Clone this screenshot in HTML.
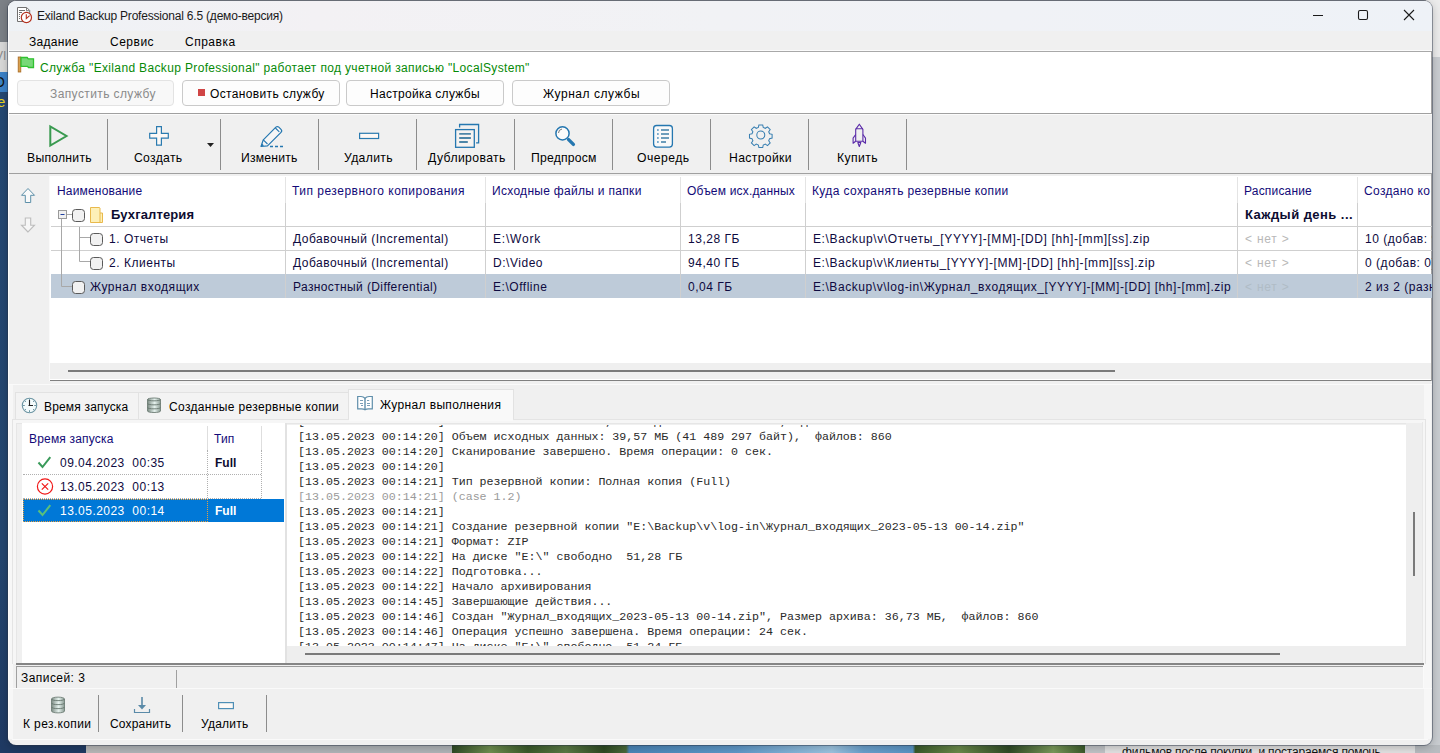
<!DOCTYPE html>
<html><head><meta charset="utf-8">
<style>
*{box-sizing:border-box}
html,body{margin:0;padding:0}
body{width:1440px;height:753px;position:relative;overflow:hidden;background:#c9cdd1;font-family:"Liberation Sans",sans-serif;font-size:12px;color:#000}
.a{position:absolute}
.t{position:absolute;white-space:nowrap;line-height:1;}
.win{position:absolute;left:8px;top:1px;width:1424px;height:744px;border-radius:8px;overflow:hidden;background:#f0f0f0;box-shadow:0 0 0 1px rgba(40,50,70,.45),0 2px 10px rgba(0,0,0,.25)}
.pc{position:absolute;left:-8px;top:-1px;width:1440px;height:753px}
.btn{position:absolute;border:1px solid #cacaca;border-radius:4px;background:#fdfdfd}
.sep{position:absolute;width:1px;background:#8c8c8c}
.hd{color:#120a78;letter-spacing:.18px}
.cell{color:#0e0a40;letter-spacing:.53px}
.log{position:absolute;left:298px;font-family:"Liberation Mono",monospace;font-size:11.65px;line-height:15px;white-space:pre;color:#2a2a2a}
</style></head><body>
<!-- desktop left strip -->
<div class="a" style="left:0;top:0;width:20px;height:42px;background:#7c8187"></div>
<div class="a" style="left:0;top:42px;width:8px;height:30px;background:#d9d9d9"></div>
<div class="a" style="left:0;top:72px;width:8px;height:20px;background:#3b82c8"></div>
<div class="a" style="left:0;top:92px;width:20px;height:661px;background:linear-gradient(180deg,#254873 0%,#244670 70%,#1f3a63 100%)"></div>
<div class="a" style="left:0;top:0;width:8px;height:120px;overflow:hidden">
  <div class="t" style="left:-5px;top:50px;font-size:12px;color:#8a8a8a">VI</div>
  <div class="t" style="left:-6px;top:75px;font-size:14px;color:#111">O</div>
  <div class="t" style="left:-3px;top:94px;font-size:15px;color:#e6d21e">e</div>
</div>
<!-- desktop bottom strip -->
<div class="a" style="left:0;top:745px;width:86px;height:8px;background:#1f3a63"></div>
<div class="a" style="left:86px;top:745px;width:34px;height:8px;background:#b8b8b8"></div>
<div class="a" style="left:120px;top:745px;width:332px;height:8px;background:#b0b4b8"></div>
<div class="a" style="left:452px;top:745px;width:633px;height:8px;background:linear-gradient(90deg,#2f4a25 0%,#6f8f50 6%,#3a5a2a 12%,#5a7a45 18%,#2e4a22 24%,#4a6a3a 27.5%,#4a86b8 28%,#5f98c8 45%,#9cc4e0 60%,#6aa0cc 65%,#5a94c4 72.8%,#3a5a2a 73.2%,#6a8a4a 80%,#2f4a25 88%,#7a9a5a 95%,#3a5a2a 100%)"></div>
<div class="a" style="left:1420px;top:0;width:20px;height:57px;background:#ececec"></div>
<div class="a" style="left:1415px;top:745px;width:25px;height:8px;background:#b8bcc0"></div>
<div class="a" style="left:1085px;top:745px;width:20px;height:8px;background:#c0c3c6"></div>
<div class="a" style="left:1105px;top:745px;width:310px;height:8px;background:#e2e2e2"></div>

<div class="a" style="left:14px;top:0;width:1412px;height:1px;background:#a9a9a9"></div>
<div class="win"><div class="pc">
  <!-- title bar -->
  <div class="a" style="left:0;top:0;width:1440px;height:31px;background:linear-gradient(90deg,#eef2f6 0%,#f3f1f4 22%,#f1f2f5 50%,#f0f2f6 70%,#eef2f7 100%)"></div>
  <svg class="a" style="left:0;top:0" width="1440" height="31">
    <path d="M17.5 7.5h9.2l3 3v11h-12.2z" fill="#fff" stroke="#707070" stroke-width="1"/>
    <path d="M26.5 8v2.7h2.8" fill="none" stroke="#707070" stroke-width=".9"/>
    <rect x="19" y="10" width="6" height="1" fill="#707070"/><rect x="19" y="12" width="3" height="1" fill="#707070"/>
    <rect x="19" y="14" width="1" height="1" fill="#707070"/><rect x="19" y="16" width="1" height="1" fill="#707070"/><rect x="19" y="18" width="1" height="1" fill="#707070"/>
    <circle cx="26.4" cy="17.5" r="5.1" fill="#fff" stroke="#b5321f" stroke-width="1.2"/>
    <path d="M26.3 14.2v4.4l3.3-3" fill="none" stroke="#b5321f" stroke-width="1.1"/>
    <path d="M1313 15.5h10" stroke="#1a1a1a" stroke-width="1.1"/>
    <rect x="1358.5" y="10.5" width="9" height="9" rx="1.5" fill="none" stroke="#1a1a1a" stroke-width="1.1"/>
    <path d="M1404 10l10 10M1414 10l-10 10" stroke="#1a1a1a" stroke-width="1.1"/>
  </svg>
  <div class="t" style="left:37px;top:9.5px;font-size:12px;letter-spacing:-.2px;color:#1a1a1a">Exiland Backup Professional 6.5 (демо-версия)</div>
  <!-- menu -->
  <div class="t" style="left:29px;top:36px;letter-spacing:.3px">Задание</div>
  <div class="t" style="left:110px;top:36px;letter-spacing:.5px">Сервис</div>
  <div class="t" style="left:185px;top:36px;letter-spacing:.5px">Справка</div>
  <!-- service panel -->
  <div class="a" style="left:0;top:50px;width:1440px;height:1px;background:#fbfbfb"></div>
  <div class="a" style="left:0;top:51px;width:1440px;height:1px;background:#a8a8a8"></div>
  <div class="a" style="left:0;top:52px;width:1440px;height:61px;background:#fff"></div>
  <div class="a" style="left:0;top:113px;width:1440px;height:1px;background:#a0a0a0"></div>
  <div class="a" style="left:1431px;top:51px;width:1px;height:63px;background:#a0a0a0"></div>
  <svg class="a" style="left:0;top:50px" width="60" height="30">
    <rect x="18.2" y="7" width="2.6" height="15" fill="#d8a050" stroke="#a86820" stroke-width=".8"/>
    <path d="M21 7.5h6.2l1 1.3h5.3v8.7h-5l-1-1.2H21z" fill="#78d878" stroke="#2fc12f" stroke-width="1.3"/>
  </svg>
  <div class="t" style="left:40px;top:62px;color:#078a07;letter-spacing:.35px">Служба "Exiland Backup Professional" работает под учетной записью "LocalSystem"</div>
  <div class="btn" style="left:17px;top:80px;width:157px;height:26px;border-color:#e3e3e3;background:#f8f8f8"></div>
  <div class="btn" style="left:182px;top:80px;width:158px;height:26px"></div>
  <div class="btn" style="left:346px;top:80px;width:158px;height:26px"></div>
  <div class="btn" style="left:512px;top:80px;width:158px;height:26px"></div>
  <div class="t" style="left:50px;top:88px;color:#8a8a8a;letter-spacing:.4px">Запустить службу</div>
  <div class="a" style="left:198px;top:89px;width:7px;height:7px;background:#d04545"></div>
  <div class="t" style="left:210px;top:88px;letter-spacing:.35px">Остановить службу</div>
  <div class="t" style="left:370px;top:88px;letter-spacing:.29px">Настройка службы</div>
  <div class="t" style="left:543px;top:88px;letter-spacing:.55px">Журнал службы</div>

  <!-- toolbar -->
  <div class="a" style="left:0;top:114px;width:1440px;height:1px;background:#fbfbfb"></div>
  <div class="a" style="left:0;top:173px;width:1440px;height:1px;background:#a0a0a0"></div>
  <div class="sep" style="left:107px;top:119px;height:51px"></div>
  <div class="sep" style="left:220px;top:119px;height:51px"></div>
  <div class="sep" style="left:318px;top:119px;height:51px"></div>
  <div class="sep" style="left:416px;top:119px;height:51px"></div>
  <div class="sep" style="left:514px;top:119px;height:51px"></div>
  <div class="sep" style="left:612px;top:119px;height:51px"></div>
  <div class="sep" style="left:710px;top:119px;height:51px"></div>
  <div class="sep" style="left:808px;top:119px;height:51px"></div>
  <div class="sep" style="left:906px;top:119px;height:51px"></div>
  <svg class="a" style="left:0;top:0" width="920" height="175">
    <!-- play -->
    <path d="M50.3 126.5v19l16.2-9.5z" fill="none" stroke="#3a9a50" stroke-width="2" stroke-linejoin="miter"/>
    <!-- plus -->
    <path d="M156.6 126.6h4.8v6.8h6.9v4.8h-6.9v6.9h-4.8v-6.9h-6.9v-4.8h6.9z" fill="#fdf9f6" stroke="#2b7bb0" stroke-width="1.2"/>
    <path d="M207 143h7l-3.5 4z" fill="#222"/>
    <!-- pencil -->
    <path d="M261 146.5l2.3-6.7 12.6-12.6c.9-.9 2-.9 2.9 0l2.2 2.2c.9.9 .9 2 0 2.9l-13.5 13.5z" fill="#f6f6f6" stroke="#2577b0" stroke-width="1.2" stroke-linejoin="round"/>
    <path d="M263.3 139.8l4.2 4.2M275.4 128l3.9 3.9" stroke="#2577b0" stroke-width="1.1"/>
    <path d="M261 146.5l1-3 2 2z" fill="#2577b0"/>
    <path d="M270 146.5h3M275 146.5h3M280 146.5h3" stroke="#2577b0" stroke-width="1.3"/>
    <!-- minus -->
    <rect x="359.6" y="133.3" width="19" height="5.2" fill="#fdf9f6" stroke="#2b7bb0" stroke-width="1.2"/>
    <!-- duplicate -->
    <path d="M459.6 127.5v-3h19v18.3h-2.5" fill="none" stroke="#2577b0" stroke-width="1.3"/>
    <rect x="455.6" y="129.6" width="18.7" height="17.7" fill="#f6f3f1" stroke="#2577b0" stroke-width="1.3"/>
    <path d="M459.2 133.9h11.7M459.2 138h11.7M459.2 142h8.6" stroke="#4d86a8" stroke-width="1.8"/>
    <!-- magnifier -->
    <circle cx="562.5" cy="133.4" r="6.6" fill="#fbfbfb" stroke="#2577b0" stroke-width="1.5"/>
    <path d="M568.6 139.6l4.8 4.8" stroke="#2577b0" stroke-width="3.4" stroke-linecap="round"/>
    <path d="M558.5 133a4.2 4.2 0 0 1 3.5-4" fill="none" stroke="#555" stroke-width=".8"/>
    <!-- queue -->
    <rect x="653.6" y="125.5" width="18.8" height="21.6" rx="3" fill="#f9f9f9" stroke="#2577b0" stroke-width="1.3"/>
    <path d="M657.2 130h1.4M657.2 134h1.4M657.2 138h1.4M657.2 142h1.4" stroke="#2577b0" stroke-width="1.4"/>
    <path d="M661 130h8M661 134h8M661 138h8M661 142h5" stroke="#3f7fa6" stroke-width="1.4"/>
    <!-- gear -->
    <g transform="translate(760.8 135) scale(.87)" fill="none" stroke="#3a80b2" stroke-width="1.2">
      <path id="gear" d="M-2.2 -11.6h4.4l.6 2.9 2.4 1 2.5-1.7 3.1 3.1-1.7 2.5 1 2.4 2.9.6v4.4l-2.9.6-1 2.4 1.7 2.5-3.1 3.1-2.5-1.7-2.4 1-.6 2.9h-4.4l-.6-2.9-2.4-1-2.5 1.7-3.1-3.1 1.7-2.5-1-2.4-2.9-.6v-4.4l2.9-.6 1-2.4-1.7-2.5 3.1-3.1 2.5 1.7 2.4-1z"/>
      <circle r="4.6"/>
    </g>
    <!-- rocket -->
    <g fill="none" stroke="#5a2aa8" stroke-width="1.1" stroke-linejoin="round">
      <path d="M859.3 124.2l-3.6 5.2v11.8h7.2v-11.8z"/>
      <path d="M855.7 128.8h7.2"/>
      <path d="M855.7 134.5l-2.6 3.6v5.2l2.6-2.1M862.9 134.5l2.6 3.6v5.2l-2.6-2.1"/>
      <path d="M857.8 142.5l1.5 4 1.5-4z"/>
    </g>
  </svg>
  <div class="t" style="left:27px;top:152px;font-size:12.2px;letter-spacing:.25px">Выполнить</div>
  <div class="t" style="left:134px;top:152px;font-size:12.2px;letter-spacing:.3px">Создать</div>
  <div class="t" style="left:241px;top:152px;font-size:12.2px;letter-spacing:.2px">Изменить</div>
  <div class="t" style="left:344px;top:152px;font-size:12.2px;letter-spacing:.35px">Удалить</div>
  <div class="t" style="left:428px;top:152px;font-size:12.2px;letter-spacing:.4px">Дублировать</div>
  <div class="t" style="left:531px;top:152px;font-size:12.2px;letter-spacing:.2px">Предпросм</div>
  <div class="t" style="left:637px;top:152px;font-size:12.2px;letter-spacing:.45px">Очередь</div>
  <div class="t" style="left:729px;top:152px;font-size:12.2px;letter-spacing:.35px">Настройки</div>
  <div class="t" style="left:837px;top:152px;font-size:12.2px;letter-spacing:.4px">Купить</div>

  <!-- table area -->
  <div class="a" style="left:50px;top:176px;width:1382px;height:187px;background:#fff"></div>
  <div class="a" style="left:50px;top:363px;width:1382px;height:16px;background:#efefef"></div>
  <div class="a" style="left:50px;top:379px;width:1382px;height:1px;background:#fff"></div>
  <div class="a" style="left:50px;top:380px;width:1382px;height:1px;background:#808080"></div>
  <div class="a" style="left:49px;top:176px;width:1px;height:205px;background:#fafafa"></div>
  <div class="a" style="left:1431px;top:174px;width:1px;height:207px;background:#a0a0a0"></div>
  <div class="a" style="left:68px;top:370px;width:1047px;height:2px;background:#7a7a7a"></div>
  <div class="a" style="left:0;top:384px;width:1440px;height:1px;background:#fafafa"></div>
  <svg class="a" style="left:0;top:170px" width="60" height="70">
    <path d="M28 18.5l-6.5 6.8h3.8v7.2h5.4v-7.2h3.8z" fill="#fafafa" stroke="#5c8fa8" stroke-width="1" stroke-linejoin="miter"/>
    <path d="M28 62l-6.5-6.8h3.8v-7.2h5.4v7.2h3.8z" fill="#f6f6f6" stroke="#bdbdbd" stroke-width="1.1"/>
  </svg>
  <!-- selected row -->
  <div class="a" style="left:51px;top:274px;width:1381px;height:24px;background:#becbd9"></div>
  <!-- row lines -->
  <div class="a" style="left:51px;top:226px;width:1381px;height:1px;background:#cfcfcf"></div>
  <div class="a" style="left:51px;top:250px;width:1381px;height:1px;background:#cfcfcf"></div>
  <!-- col dividers header part -->
  <div class="a" style="left:285px;top:177px;width:1px;height:26px;background:#e4e4e4"></div>
  <div class="a" style="left:485px;top:177px;width:1px;height:26px;background:#e4e4e4"></div>
  <div class="a" style="left:680px;top:177px;width:1px;height:26px;background:#e4e4e4"></div>
  <div class="a" style="left:805px;top:177px;width:1px;height:26px;background:#e4e4e4"></div>
  <div class="a" style="left:1237px;top:177px;width:1px;height:26px;background:#e4e4e4"></div>
  <div class="a" style="left:1357px;top:177px;width:1px;height:26px;background:#e4e4e4"></div>
  <div class="a" style="left:285px;top:203px;width:1px;height:95px;background:#cfcfcf"></div>
  <div class="a" style="left:485px;top:203px;width:1px;height:95px;background:#cfcfcf"></div>
  <div class="a" style="left:680px;top:203px;width:1px;height:95px;background:#cfcfcf"></div>
  <div class="a" style="left:805px;top:203px;width:1px;height:95px;background:#cfcfcf"></div>
  <div class="a" style="left:1237px;top:203px;width:1px;height:95px;background:#cfcfcf"></div>
  <div class="a" style="left:1357px;top:203px;width:1px;height:95px;background:#cfcfcf"></div>
  <!-- headers -->
  <div class="t hd" style="left:57px;top:185px">Наименование</div>
  <div class="t hd" style="left:292px;top:185px;letter-spacing:.49px">Тип резервного копирования</div>
  <div class="t hd" style="left:492px;top:185px;letter-spacing:.3px">Исходные файлы и папки</div>
  <div class="t hd" style="left:687px;top:185px">Объем исх.данных</div>
  <div class="t hd" style="left:812px;top:185px;letter-spacing:.38px">Куда сохранять резервные копии</div>
  <div class="t hd" style="left:1244px;top:185px">Расписание</div>
  <div class="t hd" style="left:1364px;top:185px;letter-spacing:.35px">Создано ко</div>
  <!-- tree -->
  <svg class="a" style="left:50px;top:200px" width="60" height="100">
    <path d="M11.5 19v67.5h11M29.5 27v34.5h11M29.5 37.5h11M17 14.5h5.5" fill="none" stroke="#a8a8a8" stroke-width="1"/>
    <rect x="8.5" y="10.5" width="8" height="8" fill="#f0f0f0" stroke="#9a9a9a" stroke-width="1"/>
    <path d="M10.5 14.5h4" stroke="#2040a0" stroke-width="1"/>
    <rect x="22.5" y="9.5" width="12" height="12" rx="3" fill="#f1f1f1" stroke="#5a5a5a" stroke-width="1"/>
    <rect x="40.5" y="33.5" width="12" height="12" rx="3" fill="#f1f1f1" stroke="#5a5a5a" stroke-width="1"/>
    <rect x="40.5" y="57.5" width="12" height="12" rx="3" fill="#f1f1f1" stroke="#5a5a5a" stroke-width="1"/>
    <rect x="22.5" y="81.5" width="12" height="12" rx="3" fill="#f1f1f1" stroke="#5a5a5a" stroke-width="1"/>
  </svg>
  <svg class="a" style="left:88px;top:205px" width="20" height="20">
    <path d="M2.5 2.5h9l.5 .5v5h2.5v9.5h-12z" fill="#fdf0b8" stroke="#e9b94c" stroke-width="1"/>
    <path d="M12 8v9.5" stroke="#e9b94c" stroke-width="1"/>
  </svg>
  <div class="t" style="left:111px;top:208px;font-size:13px;font-weight:bold;letter-spacing:.12px;color:#0c0c30">Бухгалтерия</div>
  <div class="t hd" style="left:1245px;top:208px;font-size:13px;font-weight:bold;letter-spacing:.45px;color:#0c0c30">Каждый день ...</div>
  <div class="t cell" style="left:109px;top:233px">1. Отчеты</div>
  <div class="t cell" style="left:109px;top:257px">2. Клиенты</div>
  <div class="t cell" style="left:90px;top:281px">Журнал входящих</div>
  <div class="t cell" style="left:293px;top:233px;">Добавочный (Incremental)</div>
  <div class="t cell" style="left:293px;top:257px;">Добавочный (Incremental)</div>
  <div class="t cell" style="left:293px;top:281px;letter-spacing:.38px">Разностный (Differential)</div>
  <div class="t cell" style="left:493px;top:233px;letter-spacing:.8px">E:\Work</div>
  <div class="t cell" style="left:493px;top:257px">D:\Video</div>
  <div class="t cell" style="left:493px;top:281px">E:\Offline</div>
  <div class="t cell" style="left:688px;top:233px">13,28 ГБ</div>
  <div class="t cell" style="left:688px;top:257px">94,40 ГБ</div>
  <div class="t cell" style="left:688px;top:281px">0,04 ГБ</div>
  <div class="t cell" style="left:813px;top:233px;letter-spacing:.62px">E:\Backup\v\Отчеты_[YYYY]-[MM]-[DD] [hh]-[mm][ss].zip</div>
  <div class="t cell" style="left:813px;top:257px;letter-spacing:.58px">E:\Backup\v\Клиенты_[YYYY]-[MM]-[DD] [hh]-[mm][ss].zip</div>
  <div class="t cell" style="left:813px;top:281px;letter-spacing:.56px">E:\Backup\v\log-in\Журнал_входящих_[YYYY]-[MM]-[DD] [hh]-[mm].zip</div>
  <div class="t" style="left:1245px;top:233px;color:#b8b8b8;letter-spacing:.77px">&lt; нет &gt;</div>
  <div class="t" style="left:1245px;top:257px;color:#b8b8b8;letter-spacing:.77px">&lt; нет &gt;</div>
  <div class="t" style="left:1245px;top:281px;color:#b0bcc6;letter-spacing:.77px">&lt; нет &gt;</div>
  <div class="t cell" style="left:1365px;top:233px">10 (добав: 9)</div>
  <div class="t cell" style="left:1365px;top:257px">0 (добав: 0)</div>
  <div class="t cell" style="left:1365px;top:281px">2 из 2 (разн: 1)</div>

  <!-- tabs -->
  <div class="a" style="left:15px;top:392px;width:124px;height:27px;background:#f3f3f3;border:1px solid #e2e2e2;border-bottom:none"></div>
  <div class="a" style="left:138px;top:392px;width:211px;height:27px;background:#f3f3f3;border:1px solid #e2e2e2;border-bottom:none"></div>
  <div class="a" style="left:348px;top:389px;width:166px;height:32px;background:#f9f9f9;border:1px solid #e2e2e2;border-bottom:none"></div>
  <div class="t" style="left:44px;top:401px;letter-spacing:.17px">Время запуска</div>
  <div class="t" style="left:169px;top:401px;letter-spacing:.35px">Созданные резервные копии</div>
  <div class="t" style="left:380px;top:399px;letter-spacing:.36px">Журнал выполнения</div>
  <svg class="a" style="left:0;top:390px" width="380" height="30">
    <circle cx="29.5" cy="15.5" r="7.2" fill="#f4fbfc" stroke="#6c95a3" stroke-width="1.1"/>
    <path d="M29.5 9v1.8M29.5 20.2v1.8M23 15.5h1.8M34.2 15.5h1.8M25 11l.9.9M34 11l-.9.9M25 20l.9-.9M34 20l-.9-.9" stroke="#6c95a3" stroke-width="1"/>
    <path d="M29.5 10v6M28.5 15.5h4.5" fill="none" stroke="#222" stroke-width="1.1"/>
    <defs><linearGradient id="dbg" x1="0" x2="1" y1="0" y2="0"><stop offset="0" stop-color="#7d8c84"/><stop offset=".55" stop-color="#e6f2ee"/><stop offset="1" stop-color="#8a9a92"/></linearGradient></defs>
    <path d="M147.5 9.5c0-2 13-2 13 0v11.5c0 2-13 2-13 0z" fill="url(#dbg)" stroke="#6f7f77" stroke-width=".9"/>
    <path d="M147.5 9.5c0 1.8 13 1.8 13 0M147.5 13.5c0 1.8 13 1.8 13 0M147.5 17.5c0 1.8 13 1.8 13 0" fill="none" stroke="#66766e" stroke-width=".9"/>
    <path d="M357.7 6.5h3.3q2.5 0 4 1.8q1.5-1.8 4-1.8h3.3v12.3h-3.8q-2.3 0-3.5 .9q-1.2-.9-3.5-.9h-3.8z" fill="#fff" stroke="#5f8eaa" stroke-width="1.2"/><path d="M365 8.3v11" stroke="#5f8eaa" stroke-width="1.4"/><path d="M360 10.5h3M360 13.5h3M361 15.5h2M367 10.5h2.2M367 13.5h3M367 15.5h3" stroke="#6a94b0" stroke-width=".9"/>
  </svg>
  <!-- tab content frame -->
  <div class="a" style="left:9px;top:385px;width:4px;height:354px;background:#f7f7f7"></div>
  <div class="a" style="left:1424px;top:385px;width:7px;height:354px;background:#f7f7f7"></div>
  <div class="a" style="left:12px;top:419px;width:1414px;height:245px;border:1px solid #e4e4e4;border-bottom:none;background:#f6f6f6"></div>
  <div class="a" style="left:16px;top:423px;width:1407px;height:241px;background:#f0f0f0;border-left:1px solid #e6e6e6;border-top:1px solid #e6e6e6"></div>
  <div class="a" style="left:349px;top:419px;width:164px;height:2px;background:#f9f9f9"></div>
  <!-- list -->
  <div class="a" style="left:22px;top:423px;width:263px;height:240px;background:#fff"></div>
  <div class="a" style="left:207px;top:426px;width:1px;height:24px;background:#dedede"></div>
  <div class="a" style="left:261px;top:426px;width:1px;height:24px;background:#dedede"></div>
  <div class="a" style="left:207px;top:450px;width:0;height:72px;border-left:1px dotted #b0b0b0"></div>
  <div class="a" style="left:261px;top:450px;width:0;height:72px;border-left:1px dotted #b0b0b0"></div>
  <div class="a" style="left:23px;top:474px;width:238px;height:0;border-top:1px dotted #b0b0b0"></div>
  <div class="a" style="left:23px;top:498px;width:238px;height:0;border-top:1px dotted #b0b0b0"></div>
  <div class="a" style="left:23px;top:499px;width:261px;height:23px;background:#0078d7"></div>
  <div class="a" style="left:23px;top:499px;width:185px;height:23px;border:1px dotted #e8a040"></div>
  <div class="t hd" style="left:29px;top:433px">Время запуска</div>
  <div class="t hd" style="left:214px;top:433px">Тип</div>
  <div class="t cell" style="left:60px;top:457px;letter-spacing:.47px">09.04.2023&nbsp;&nbsp;00:35</div>
  <div class="t cell" style="left:60px;top:481px;letter-spacing:.47px">13.05.2023&nbsp;&nbsp;00:13</div>
  <div class="t" style="left:60px;top:505px;letter-spacing:.47px;color:#fff">13.05.2023&nbsp;&nbsp;00:14</div>
  <div class="t" style="left:215px;top:457px;font-weight:bold;color:#0c0c30">Full</div>
  <div class="t" style="left:215px;top:505px;font-weight:bold;color:#fff">Full</div>
  <svg class="a" style="left:30px;top:450px" width="30" height="70">
    <path d="M8.5 12.5l4 4.5 7.8-9.8" fill="none" stroke="#3a9a5a" stroke-width="2"/>
    <circle cx="15" cy="36.5" r="7.6" fill="#fff" stroke="#f01818" stroke-width="1.2"/>
    <path d="M11.8 33.3l6.4 6.4M18.2 33.3l-6.4 6.4" stroke="#f01818" stroke-width="1.2"/>
    <path d="M8.5 60.5l4 4.5 7.8-9.8" fill="none" stroke="#5ac07a" stroke-width="2"/>
  </svg>
  <!-- splitter -->
  <div class="a" style="left:285px;top:423px;width:2px;height:240px;background:#e2e2e2"></div>
  <!-- log -->
  <div class="a" style="left:287px;top:425px;width:1119px;height:221px;background:#fff;overflow:hidden">
    <div class="log" style="left:11px;top:-11px">[13.05.2023 00:14:20] Найоено элементов всег,  обнадожено каталогов в,спдске исхооных
[13.05.2023 00:14:20] Объем исходных данных: 39,57 МБ (41 489 297 байт),  файлов: 860
[13.05.2023 00:14:20] Сканирование завершено. Время операции: 0 сек.
[13.05.2023 00:14:20]
[13.05.2023 00:14:21] Тип резервной копии: Полная копия (Full)
<span style="color:#9a9a9a">[13.05.2023 00:14:21] (case 1.2)</span>
[13.05.2023 00:14:21]
[13.05.2023 00:14:21] Создание резервной копии "E:\Backup\v\log-in\Журнал_входящих_2023-05-13 00-14.zip"
[13.05.2023 00:14:21] Формат: ZIP
[13.05.2023 00:14:22] На диске "E:\" свободно  51,28 ГБ
[13.05.2023 00:14:22] Подготовка...
[13.05.2023 00:14:22] Начало архивирования
[13.05.2023 00:14:45] Завершающие действия...
[13.05.2023 00:14:46] Создан "Журнал_входящих_2023-05-13 00-14.zip", Размер архива: 36,73 МБ,  файлов: 860
[13.05.2023 00:14:46] Операция успешно завершена. Время операции: 24 сек.
[13.05.2023 00:14:47] На диске "E:\" свободно  51,24 ГБ</div>
  </div>
  <div class="a" style="left:287px;top:646px;width:1119px;height:16px;background:#eeeeee"></div>
  <div class="a" style="left:305px;top:653px;width:975px;height:2px;background:#7a7a7a"></div>
  <div class="a" style="left:1406px;top:423px;width:16px;height:239px;background:#eeeeee"></div>
  <div class="a" style="left:1413px;top:512px;width:2px;height:64px;background:#7a7a7a"></div>
  <div class="a" style="left:1422px;top:422px;width:1px;height:241px;background:#e8e8e8"></div>
  <!-- bottom lines -->
  <div class="a" style="left:16px;top:663px;width:1408px;height:2px;background:#858585"></div>
  <div class="a" style="left:16px;top:666px;width:1407px;height:1px;background:#9c9c9c"></div>
  <div class="a" style="left:1423px;top:666px;width:1px;height:23px;background:#fafafa"></div>
  <!-- status bar -->
  <div class="a" style="left:16px;top:667px;width:1px;height:21px;background:#a0a0a0"></div>
  <div class="a" style="left:176px;top:670px;width:1px;height:18px;background:#a0a0a0"></div>
  <div class="t" style="left:21px;top:672px;letter-spacing:.44px">Записей: 3</div>
  <div class="a" style="left:0;top:688px;width:1440px;height:1px;background:#fafafa"></div>
  <!-- bottom toolbar -->
  <div class="sep" style="left:98px;top:695px;height:37px"></div>
  <div class="sep" style="left:182px;top:695px;height:37px"></div>
  <div class="sep" style="left:266px;top:695px;height:37px"></div>
  <svg class="a" style="left:0;top:690px" width="280" height="30">
    <g>
      <defs><linearGradient id="dbg2" x1="0" x2="1" y1="0" y2="0"><stop offset="0" stop-color="#7d8c84"/><stop offset=".55" stop-color="#e6f2ee"/><stop offset="1" stop-color="#8a9a92"/></linearGradient></defs>
      <path d="M51.5 9c0-2.5 13-2.5 13 0v12c0 2.5-13 2.5-13 0z" fill="url(#dbg2)" stroke="#6f7f77" stroke-width=".9"/>
      <path d="M51.5 9c0 2.2 13 2.2 13 0M51.5 13c0 2.2 13 2.2 13 0M51.5 17c0 2.2 13 2.2 13 0" fill="none" stroke="#66766e" stroke-width=".9"/>
    </g>
    <path d="M142 7v9" fill="none" stroke="#5a8aa8" stroke-width="1.6"/><path d="M138 15h8l-4 4.5z" fill="#5a8aa8"/>
    <path d="M134.5 19v3.5h15v-3.5" fill="none" stroke="#5a8aa8" stroke-width="1.2"/>
    <rect x="218.6" y="12.6" width="14.8" height="6" fill="#fdf9f6" stroke="#4f8fb6" stroke-width="1.2"/>
  </svg>
  <div class="t" style="left:23px;top:718px;letter-spacing:.38px">К рез.копии</div>
  <div class="t" style="left:110px;top:718px;letter-spacing:.17px">Сохранить</div>
  <div class="t" style="left:201px;top:718px;letter-spacing:.25px">Удалить</div>
  <!-- frame bottom -->
  <div class="a" style="left:12px;top:739px;width:1416px;height:1px;background:#fafafa"></div>
  <div class="a" style="left:8px;top:0;width:1px;height:753px;background:#fbfbfb"></div>
</div></div>
<div class="t" style="left:1122px;top:746px;font-size:12px;letter-spacing:-.17px;color:#111">фильмов после покупки, и постараемся помочь</div>
</body></html>
